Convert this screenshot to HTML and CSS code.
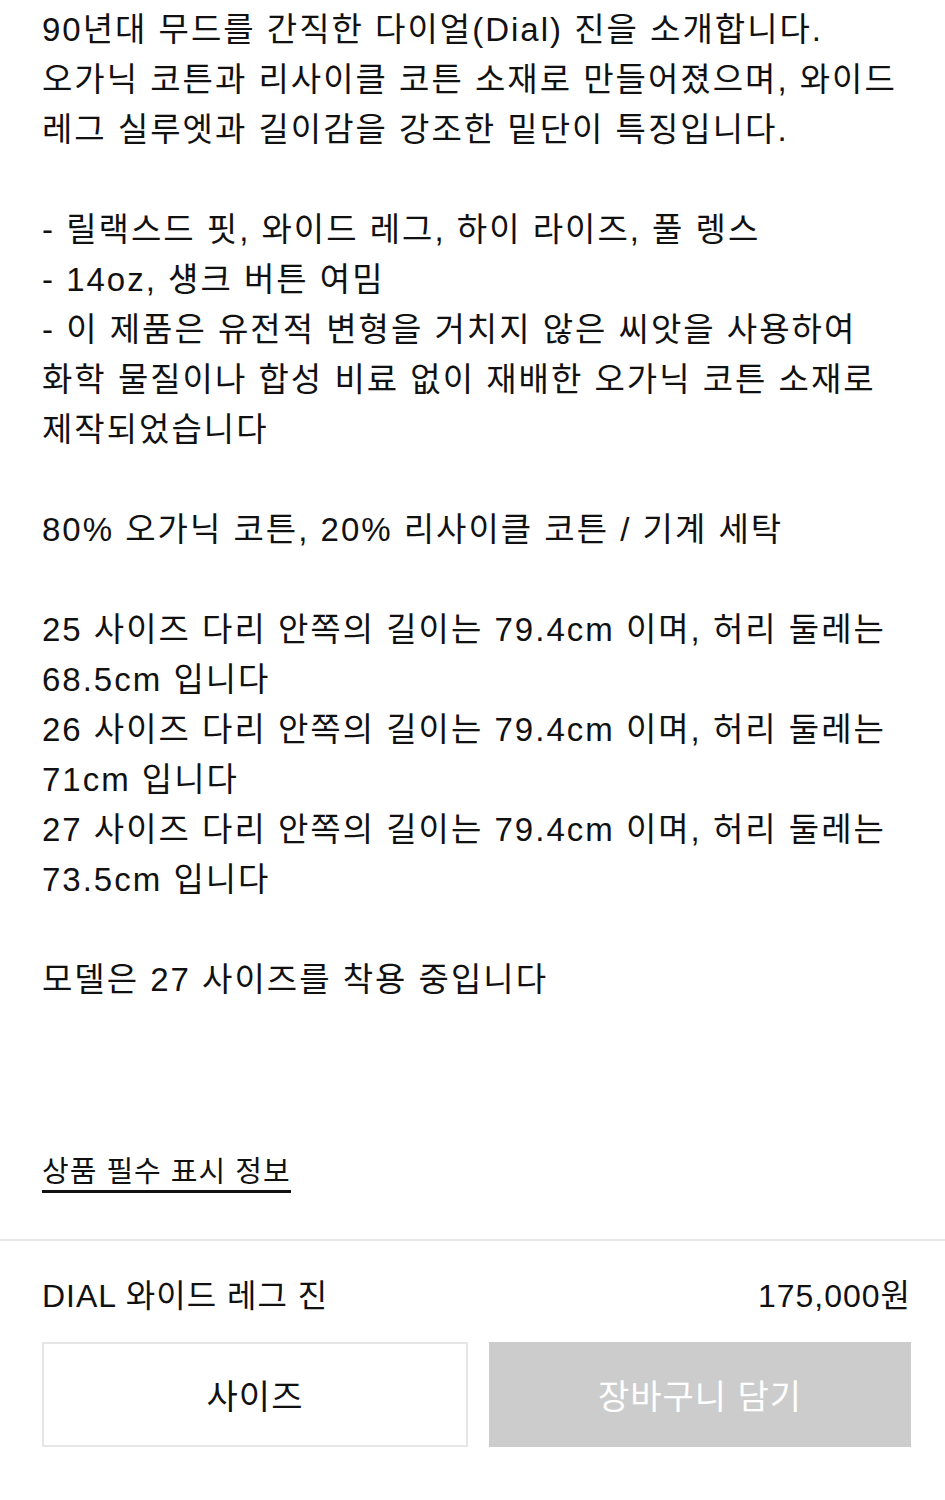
FILE: index.html
```html
<!DOCTYPE html>
<html lang="ko">
<head>
<meta charset="utf-8">
<title>DIAL 와이드 레그 진</title>
<link rel="stylesheet" href="styles.css">
</head>
<body>
<main class="detail">
  <p class="para">90년대 무드를 간직한 다이얼(Dial) 진을 소개합니다.<br>오가닉 코튼과 리사이클 코튼 소재로 만들어졌으며, 와이드<br>레그 실루엣과 길이감을 강조한 밑단이 특징입니다.</p>
  <p class="para">- 릴랙스드 핏, 와이드 레그, 하이 라이즈, 풀 렝스<br>- 14oz, 섕크 버튼 여밈<br>- 이 제품은 유전적 변형을 거치지 않은 씨앗을 사용하여<br>화학 물질이나 합성 비료 없이 재배한 오가닉 코튼 소재로<br>제작되었습니다</p>
  <p class="para">80% 오가닉 코튼, 20% 리사이클 코튼 / 기계 세탁</p>
  <p class="para">25 사이즈 다리 안쪽의 길이는 79.4cm 이며, 허리 둘레는<br>68.5cm 입니다<br>26 사이즈 다리 안쪽의 길이는 79.4cm 이며, 허리 둘레는<br>71cm 입니다<br>27 사이즈 다리 안쪽의 길이는 79.4cm 이며, 허리 둘레는<br>73.5cm 입니다</p>
  <p class="para">모델은 27 사이즈를 착용 중입니다</p>
  <a class="info-link" href="#">상품 필수 표시 정보</a>
</main>
<footer class="buybar">
  <div class="buybar-head">
    <span class="prod-name">DIAL 와이드 레그 진</span>
    <span class="prod-price">175,000원</span>
  </div>
  <div class="buybar-actions">
    <button class="btn btn-size" type="button">사이즈</button>
    <button class="btn btn-cart" type="button" disabled>장바구니 담기</button>
  </div>
</footer>
</body>
</html>
```
FILE: styles.css
```css
html, body {
  margin: 0;
  padding: 0;
  background: #fff;
}
body {
  font-family: "Liberation Sans", "Noto Sans CJK KR", sans-serif;
  color: #111;
}
.detail {
  padding: 5px 42px 0;
}
.para {
  margin: 0 0 50px;
  font-size: 33px;
  line-height: 50px;
  letter-spacing: 2px;
  white-space: nowrap;
}
.info-link {
  display: inline-block;
  margin-top: 99px;
  font-size: 29px;
  line-height: 36px;
  letter-spacing: 1px;
  color: #111;
  text-decoration: none;
  border-bottom: 3px solid #111;
}
.buybar {
  margin-top: 46px;
  border-top: 2px solid #e6e6e6;
  padding: 27px 34px 0 42px;
}
.buybar-head {
  display: flex;
  justify-content: space-between;
  align-items: center;
  height: 50px;
  font-size: 32px;
  letter-spacing: 1px;
}
.buybar-actions {
  display: flex;
  gap: 21px;
  margin-top: 24px;
}
.btn {
  flex: 1;
  height: 105px;
  font-family: inherit;
  font-size: 34px;
  letter-spacing: 1px;
  margin: 0;
  padding: 0;
}
.btn-size {
  background: #fff;
  border: 2px solid #e6e6e6;
  color: #111;
}
.btn-cart {
  background: #cccccc;
  border: 0;
  color: #fff;
}
```
